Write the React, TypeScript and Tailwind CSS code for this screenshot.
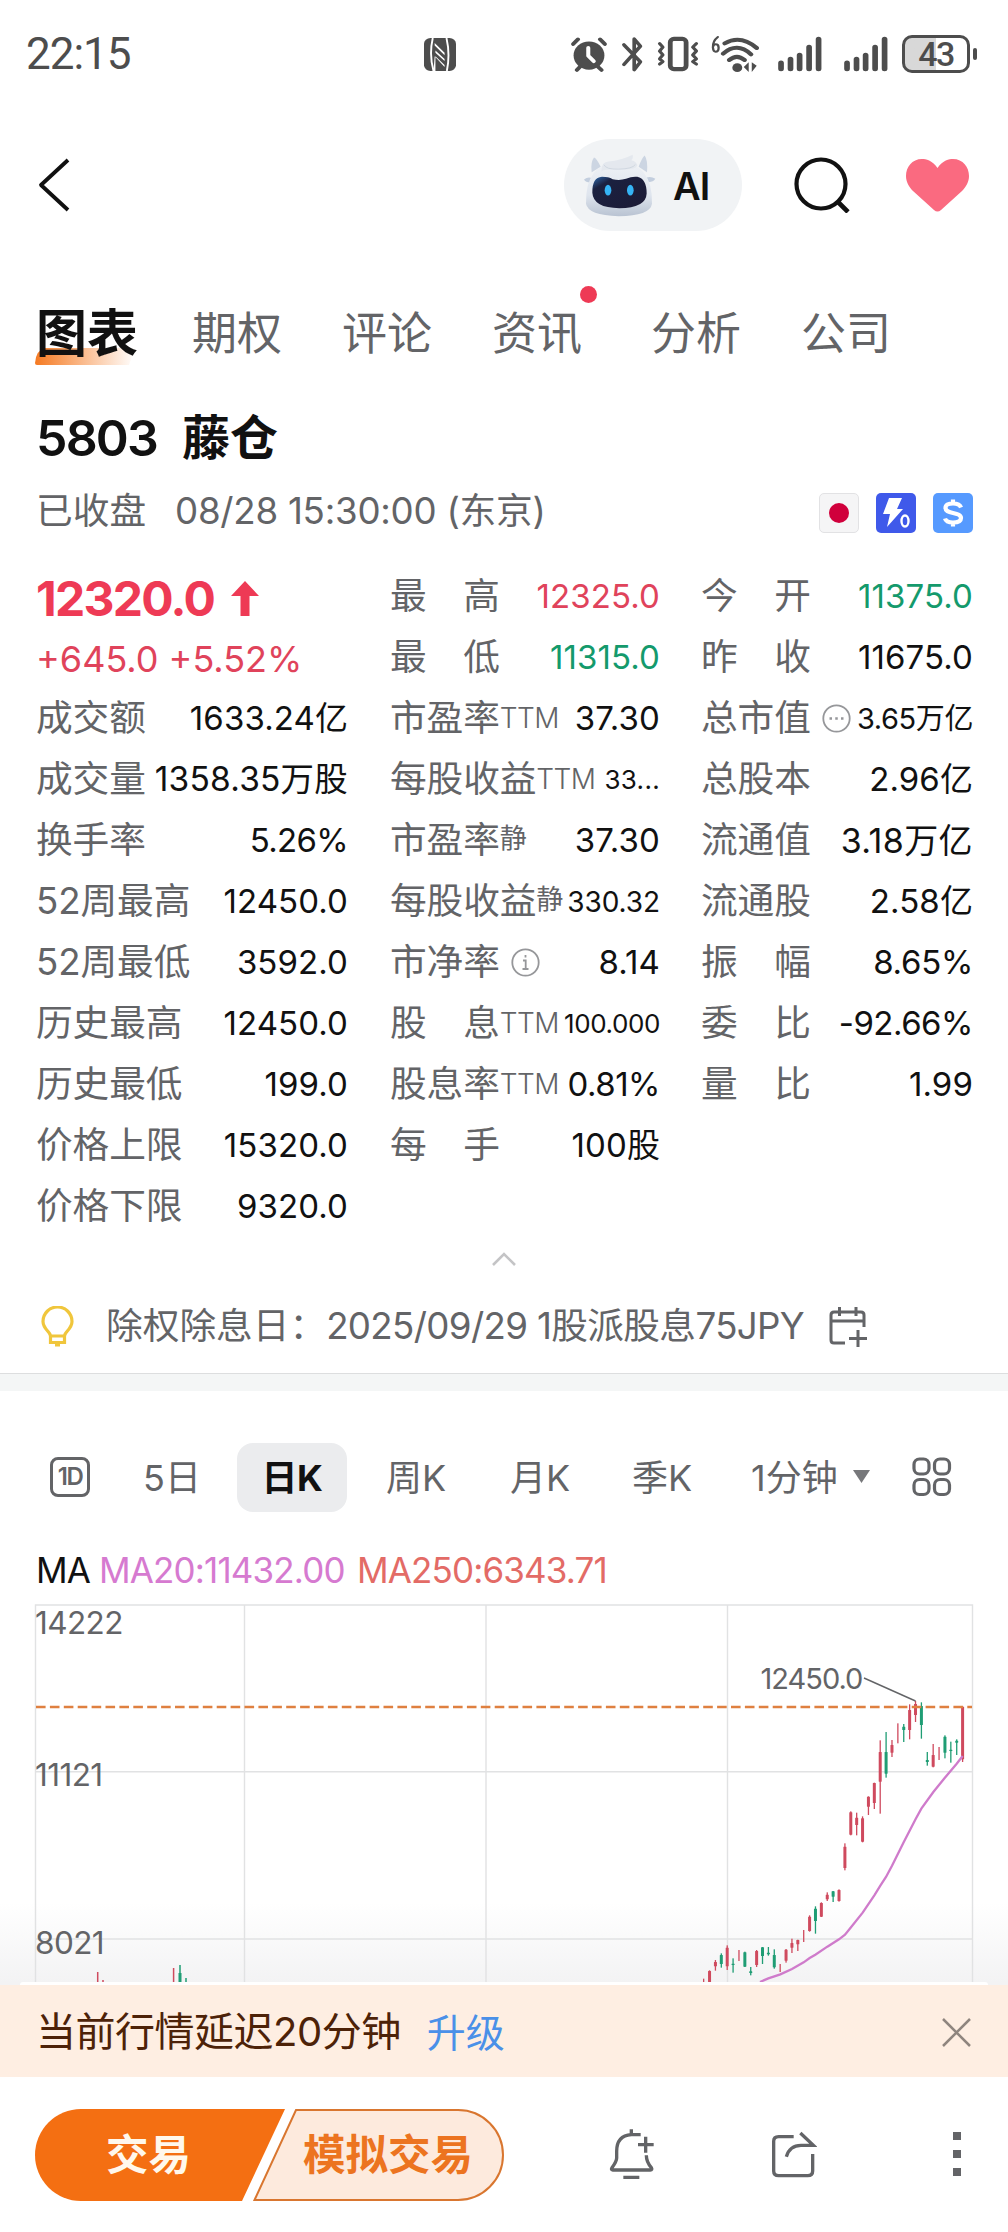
import React from 'react';
import clsx from 'clsx';

type Tone = 'up' | 'down' | 'plain';

interface Stat {
  label: string;
  suffix?: string;
  icon?: 'more' | 'info';
  value: string;
  tone?: Tone;
  size?: string;
}

const leftStats: Stat[] = [
  { label: '成交额', value: '1633.24亿' },
  { label: '成交量', value: '1358.35万股', size: 'text-[33.5px] tracking-[0.2px]' },
  { label: '换手率', value: '5.26%', size: 'text-[33px] tracking-[-0.7px]' },
  { label: '52周最高', value: '12450.0' },
  { label: '52周最低', value: '3592.0' },
  { label: '历史最高', value: '12450.0' },
  { label: '历史最低', value: '199.0' },
  { label: '价格上限', value: '15320.0' },
  { label: '价格下限', value: '9320.0' },
];

const middleStats: Stat[] = [
  { label: '最　高', value: '12325.0', tone: 'up' },
  { label: '最　低', value: '11315.0', tone: 'down' },
  { label: '市盈率', suffix: 'TTM', value: '37.30' },
  { label: '每股收益', suffix: 'TTM', value: '33...', size: 'text-[26px] tracking-[0.3px]' },
  { label: '市盈率', suffix: '静', value: '37.30' },
  { label: '每股收益', suffix: '静', value: '330.32', size: 'text-[28px] tracking-[-0.1px]' },
  { label: '市净率', icon: 'info', value: '8.14' },
  { label: '股　息', suffix: 'TTM', value: '100.000', size: 'text-[26px] tracking-[-0.4px]' },
  { label: '股息率', suffix: 'TTM', value: '0.81%', size: 'text-[33px] tracking-[-0.5px]' },
  { label: '每　手', value: '100股' },
];

const rightStats: Stat[] = [
  { label: '今　开', value: '11375.0', tone: 'down' },
  { label: '昨　收', value: '11675.0' },
  { label: '总市值', icon: 'more', value: '3.65万亿', size: 'text-[29px] tracking-[-0.4px]' },
  { label: '总股本', value: '2.96亿' },
  { label: '流通值', value: '3.18万亿', size: 'text-[34px] tracking-[0.4px]' },
  { label: '流通股', value: '2.58亿' },
  { label: '振　幅', value: '8.65%', size: 'text-[33px] tracking-[-0.3px]' },
  { label: '委　比', value: '-92.66%', size: 'text-[33px] tracking-[-0.5px]' },
  { label: '量　比', value: '1.99' },
];

// [up, high, bodyTop, bodyBottom, low], newest first, in thirds of a pixel
const candles: [boolean, number, number, number, number][] = [
  [true, 320, 320, 478, 486],
  [false, 418, 422, 428, 465],
  [false, 425, 449, 453, 488],
  [false, 406, 410, 458, 475],
  [true, 441, 0, 0, 480],
  [true, 432, 465, 500, 502],
  [false, 456, 480, 486, 497],
  [false, 307, 318, 375, 416],
  [true, 303, 312, 345, 366],
  [true, 313, 330, 390, 418],
  [false, 372, 380, 390, 426],
  [true, 370, 0, 0, 430],
  [true, 420, 435, 458, 471],
  [false, 396, 456, 521, 533],
  [true, 421, 456, 545, 641],
  [true, 548, 549, 609, 627],
  [true, 589, 590, 620, 645],
  [true, 649, 655, 725, 727],
  [true, 638, 653, 675, 706],
  [true, 634, 637, 704, 706],
  [true, 730, 740, 804, 811],
  [true, 868, 870, 903, 905],
  [false, 873, 874, 890, 906],
  [true, 877, 884, 898, 903],
  [true, 907, 909, 950, 951],
  [false, 919, 926, 963, 1001],
  [true, 946, 950, 993, 995],
  [true, 990, 0, 0, 1026],
  [true, 1019, 1020, 1033, 1053],
  [true, 1016, 1029, 1043, 1059],
  [true, 1047, 1049, 1082, 1088],
  [true, 1092, 0, 0, 1116],
  [false, 1048, 1065, 1102, 1106],
  [false, 1041, 1058, 1063, 1067],
  [false, 1041, 1042, 1068, 1092],
  [true, 1050, 1053, 1095, 1101],
  [false, 1101, 1114, 1119, 1126],
  [false, 1055, 1057, 1100, 1101],
  [true, 1050, 0, 0, 1083],
  [false, 1075, 1091, 1095, 1118],
  [true, 1036, 1043, 1099, 1110],
  [false, 1060, 1065, 1092, 1103],
  [true, 1080, 1086, 1099, 1112],
  [true, 1111, 1113, 1146, 1147],
  [true, 1136, 0, 0, 1147],
];

const ma20: [number, number][] = [
  [360, 1146], [385, 1135], [421, 1123], [456, 1107], [491, 1087], [509, 1074], [526, 1064],
  [562, 1040], [597, 1018], [615, 1004], [633, 982], [668, 938], [703, 886], [721, 857],
  [738, 831], [756, 797], [791, 727], [827, 657], [844, 626], [880, 576], [914, 534],
  [950, 491], [968, 468],
];

const toX = (v: number) => 640 + v / 3;
const toY = (v: number) => v / 3 - 3;

const Signal = ({ className }: { className?: string }) => (
  <svg className={clsx('h-9 w-11', className)} viewBox="968 45 116 108" preserveAspectRatio="none" stroke="#4d4d4d" strokeWidth="15" strokeLinecap="round">
    <path d="M976 126V143M1001 115V143M1025 103V143M1050 79V143M1075 55V143" />
  </svg>
);

const StatusBar = () => (
  <div className="flex h-[108px] items-center pl-[26px] pr-[31px] text-[#4d4d4d]">
    <span className="w-[398px] font-[Roboto] text-[44px] leading-none tracking-[-1px]">22:15</span>
    <svg className="h-[33px] w-8" viewBox="37 50 84 98" preserveAspectRatio="none">
      <rect x="37" y="50" width="84" height="98" rx="17" fill="#4d4d4d" />
      <path d="M60 50Q50 100 62 148M96 50Q106 98 97 148" stroke="#fff" strokeWidth="5" fill="none" />
      <path d="M65 65V72L91 101V94ZM67 87V94L91 118V112ZM67 104V148H62L65 104L91 136V130Z" fill="#fff" />
    </svg>
    <div className="ml-auto flex items-center">
      <svg className="h-[35px] w-9" viewBox="422 47 98 104" preserveAspectRatio="none">
        <circle cx="471" cy="102" r="42" fill="#4d4d4d" />
        <path d="M428 68L441 54M514 68L501 54M438 145L446 136M505 145L496 136" stroke="#4d4d4d" strokeWidth="11" strokeLinecap="round" />
        <path d="M469 79V103L484 119" stroke="#fff" strokeWidth="11" strokeLinecap="round" strokeLinejoin="round" fill="none" />
      </svg>
      <svg className="ml-3.5 h-9 w-[22px]" viewBox="554 43 60 110" preserveAspectRatio="none" fill="none" stroke="#4d4d4d" strokeWidth="10" strokeLinejoin="round" strokeLinecap="round">
        <path d="M562 70L607 122L590 146V52L607 74L562 130" />
      </svg>
      <svg className="ml-3.5 h-9 w-[42px]" viewBox="648 44 114 110" preserveAspectRatio="none" fill="none" stroke="#4d4d4d">
        <rect x="684" y="53" width="43" height="92" rx="10" strokeWidth="13" />
        <path d="M655 67L664 78L655 90L664 102L655 114L664 122L655 130M755 67L745 78L755 90L745 102L755 114L745 122L755 130" strokeWidth="9" strokeLinecap="round" strokeLinejoin="round" />
      </svg>
      <svg className="ml-3 h-[38px] w-12" viewBox="792 40 126 114" preserveAspectRatio="none" fill="none" stroke="#4d4d4d" strokeLinecap="round">
        <path d="M828 65Q870 38 912 79M824 96Q860 60 897 98M840 115Q860 96 880 115" strokeWidth="12" />
        <circle cx="861" cy="138" r="13" fill="#4d4d4d" stroke="none" />
        <path d="M878 136L891 122V151ZM899 122V151L912 132Z" fill="#4d4d4d" stroke="none" />
        <path d="M810 46Q796 58 797 78Q798 90 804 90Q812 90 812 78Q812 68 804 68Q799 68 797 76" strokeWidth="6" />
      </svg>
      <Signal className="ml-[19px]" />
      <Signal className="ml-[22px]" />
      <div className="ml-3.5 flex h-[38px] w-[68px] items-center justify-center rounded-[10px] border-[3px] border-[#4d4d4d] bg-gradient-to-r from-[#d8d8d8] from-50% to-white to-50% font-[Roboto] text-[34px] font-medium leading-none tracking-[-1.5px]">
        43
      </div>
      <span className="ml-[3px] h-3 w-1 rounded-full bg-[#4d4d4d]" />
    </div>
  </div>
);

const Robot = () => (
  <svg className="h-[67px] w-[75px]" viewBox="70 60 225 200">
    <defs>
      <linearGradient id="shell" x1="0" y1="0" x2="0" y2="1">
        <stop offset="0" stopColor="#eef1f5" />
        <stop offset="0.6" stopColor="#dfe5ee" />
        <stop offset="1" stopColor="#b9c3d2" />
      </linearGradient>
      <linearGradient id="visor" x1="0" y1="0" x2="1" y2="1">
        <stop offset="0" stopColor="#2f6cb0" />
        <stop offset="0.22" stopColor="#1b2140" />
        <stop offset="1" stopColor="#1c1a35" />
      </linearGradient>
    </defs>
    <path d="M99 120Q95 90 106 76Q114 78 126 104ZM265 120Q268 84 258 70Q250 76 240 104Z" fill="#ccd5e2" />
    <path d="M76 142Q88 132 100 138L96 152Q80 150 76 142ZM290 140Q278 132 264 136L270 150Q284 150 290 140Z" fill="#c3cede" />
    <path d="M82 215Q80 92 180 92Q282 92 280 215Q274 252 180 252Q88 250 82 215Z" fill="url(#shell)" />
    <path d="M101 182Q100 136 130 134Q150 134 162 141Q182 146 202 140Q220 132 236 134Q264 140 264 184Q262 228 182 228Q104 228 101 182Z" fill="url(#visor)" />
    <path d="M128 118Q128 88 150 88Q186 86 222 68Q224 80 218 84Q234 88 236 100Q232 114 180 112Q140 110 128 118Z" fill="#e4e8ee" />
    <path d="M136 98Q142 112 180 111Q222 110 230 97" fill="none" stroke="#c6ced9" strokeWidth="2" />
    <ellipse cx="148" cy="174" rx="10" ry="16" fill="#35b4f5" />
    <ellipse cx="215" cy="174" rx="10" ry="16" fill="#35b4f5" />
  </svg>
);

const Header = () => (
  <div className="flex h-[154px] items-center pl-[37px] pr-[38px]">
    <svg className="h-[54px] w-[34px]" viewBox="0 0 34 54" fill="none" stroke="#111" strokeWidth="3.8">
      <path d="M31 2L4 27L31 52" strokeLinejoin="round" />
    </svg>
    <div className="ml-auto flex h-[92px] w-[178px] items-center rounded-full bg-[#f1f3f5] pl-[18px]">
      <Robot />
      <span className="ml-4 pt-0.5 text-[38px] font-semibold leading-none tracking-[-0.8px] text-[#111]">AI</span>
    </div>
    <svg className="ml-[52px] h-[56px] w-[56px]" viewBox="0 0 56 56" fill="none" stroke="#111" strokeWidth="4.2">
      <circle cx="27" cy="27" r="24.5" />
      <path d="M43 44L54 55" strokeWidth="4.6" />
    </svg>
    <svg className="ml-[55px] h-[54px] w-[65px]" viewBox="0 0 65 54" fill="#fa6a80">
      <path d="M32.500 10C27 2 21 1 17 1C7 1 1 9 1 18C1 24 4 29 8 33L29 52Q32.500 55 36 52L57 33C61 29 64 24 64 18C64 9 58 1 48 1C44 1 38 2 32.500 10Z" />
    </svg>
  </div>
);

const Tabs = () => (
  <div className="flex h-[142px] items-center pl-9 text-[45px] leading-none text-[#636467]">
    <div className="relative mr-[54px] text-[51px] font-bold text-[#111]">
      <svg className="absolute -left-px top-10 h-[17px] w-[100px]" viewBox="0 0 100 17">
        <defs>
          <linearGradient id="tabline">
            <stop offset="0" stopColor="#f57a22" />
            <stop offset="1" stopColor="#fff" />
          </linearGradient>
        </defs>
        <path d="M0 15Q1 2 10 0H100L94 17H2Q0 17 0 15Z" fill="url(#tabline)" />
      </svg>
      <span className="relative">图表</span>
    </div>
    <span className="mr-[60px]">期权</span>
    <span className="mr-[60px]">评论</span>
    <span className="relative mr-[69px]">
      资讯
      <i className="absolute -right-[15px] -top-[25px] size-[17px] rounded-full bg-[#ee3a55]" />
    </span>
    <span className="mr-[60px]">分析</span>
    <span>公司</span>
  </div>
);

const Badges = () => (
  <div className="ml-auto flex gap-[17px] pt-[3px]">
    <div className="flex size-10 items-center justify-center rounded-[5px] border border-[#e2e2e4] bg-[#f5f5f6]">
      <span className="size-5 rounded-full bg-[#d0003c]" />
    </div>
    <svg className="size-10" viewBox="0 0 40 40">
      <rect width="40" height="40" rx="5" fill="#3f59ea" />
      <path d="M13 5H26L21 16H27L11 34L14 21H7Z" fill="#fff" />
      <ellipse cx="29" cy="28" rx="3.500" ry="5.500" fill="none" stroke="#fff" strokeWidth="2.400" />
    </svg>
    <svg className="size-10" viewBox="0 0 40 40" fill="none" stroke="#fff">
      <rect width="40" height="40" rx="5" fill="#569aff" stroke="none" />
      <path d="M28 14.500C27 11.500 24 10.500 20 10.500C15 10.500 12.500 12 12.500 15C12.500 18 15 19 20 20C25 21 28 22 28 25C28 28 25 29.500 20 29.500C16 29.500 13 29 12 25.500M20 6.500V10M20 30V33.500" strokeWidth="4.200" />
    </svg>
  </div>
);

const StatRow = ({ stat }: { stat: Stat }) => (
  <div className="flex h-[61px] items-center whitespace-nowrap leading-none">
    <span className="text-[36.7px] tracking-[-0.1px] text-[#636467]">{stat.label}</span>
    {stat.suffix === 'TTM' && <span className="mb-0.5 text-[28px] font-light tracking-[-0.6px] text-[#636467]">TTM</span>}
    {stat.suffix === '静' && <span className="mb-1 text-[27px] text-[#636467]">静</span>}
    {stat.icon && (
      <svg className="ml-[11px] size-[29px]" viewBox="0 0 29 29" fill="none" stroke="#96979a" strokeWidth="1.800">
        <circle cx="14.500" cy="14.500" r="13.200" />
        {stat.icon === 'more' ? (
          <path d="M7.500 14.500h2.500M13.250 14.500h2.500M19 14.500h2.500" strokeWidth="2.500" />
        ) : (
          <path d="M14.500 7v2.500M12 12.500h2.700v8M11.500 21h6" />
        )}
      </svg>
    )}
    <span
      className={clsx(
        'ml-auto',
        stat.size ?? 'text-[33px] tracking-[0.1px]',
        stat.tone === 'up' && 'text-[#e0435b]',
        stat.tone === 'down' && 'text-[#149a6c]',
        !stat.tone && 'text-[#111]',
      )}
    >
      {stat.value}
    </span>
  </div>
);

const Quote = () => (
  <section>
    <div className="flex h-[66px] items-center pl-9 pt-0.5 text-[50px] font-bold leading-none text-[#111]">
      <span className="w-[146px] font-semibold tracking-[-1.8px]">5803</span>
      <span className="text-[48px]">藤仓</span>
    </div>
    <div className="flex h-[82px] items-center pl-9 pr-[35px] pt-px text-[36.7px] leading-none text-[#636467]">
      <span className="w-[139px]">已收盘</span>
      <span className="tracking-[-0.25px]">08/28 15:30:00 (东京)</span>
      <Badges />
    </div>
    <div className="flex pl-9 pr-[35px] pt-3.5">
      <div className="w-[312px]">
        <div className="flex h-[61px] items-center pt-1 text-[48px] font-bold leading-none tracking-[-1.7px] text-[#ee3a55]">
          12320.0
          <svg className="ml-[17px] h-9 w-7" viewBox="0 0 28 36" fill="#ee3a55">
            <path d="M14 0L28 15H18.500V35H9.500V15H0Z" />
          </svg>
        </div>
        <div className="flex h-[61px] items-center pt-0.5 text-[36px] leading-none text-[#e0435b]">+645.0 +5.52%</div>
        {leftStats.map((s) => <StatRow key={s.label} stat={s} />)}
      </div>
      <div className="ml-[42px] w-[270px]">
        {middleStats.map((s, i) => <StatRow key={i} stat={s} />)}
      </div>
      <div className="ml-[41px] w-[272px]">
        {rightStats.map((s) => <StatRow key={s.label} stat={s} />)}
      </div>
    </div>
    <div className="flex h-[43px] items-center justify-center">
      <svg className="h-3.5 w-6" viewBox="0 0 24 14" fill="none" stroke="#c4c4c6" strokeWidth="2.600">
        <path d="M1 13L12 2L23 13" />
      </svg>
    </div>
  </section>
);

const DividendNotice = () => (
  <div className="flex h-[93px] items-center pl-[41px] text-[36.7px] leading-none text-[#636467]">
    <svg className="h-[41px] w-[33px]" viewBox="0 0 33 41" fill="none" stroke="#f0c63c" strokeWidth="3.200">
      <path d="M9.500 30C9.500 26 2 23 2 15.500A14.500 14.500 0 0 1 31 15.500C31 23 23.500 26 23.500 30Z" strokeLinejoin="round" />
      <path d="M9.500 30V36.500H23.500V30M14 39H19" />
    </svg>
    <span className="ml-8">除权除息日：</span>
    <span className="tracking-[-0.65px]">2025/09/29 1股派股息75JPY</span>
    <svg className="ml-[25px] h-[42px] w-[39px]" viewBox="0 0 39 42" fill="none" stroke="#636467" strokeWidth="3">
      <path d="M35 21V9Q35 6 32 6H5Q2 6 2 9V34Q2 37 5 37H16M2 15H35M10.500 1V10M27 1V10M29 24V41M20 32.500H38" />
    </svg>
  </div>
);

const Periods = () => (
  <div className="mt-[26px] flex h-[120px] items-center pl-[50px] text-[36px] leading-none text-[#636467]">
    <span className="flex size-10 items-center justify-center rounded-lg border-[3px] border-[#636467] text-[24px] font-semibold tracking-[-1.4px]">1D</span>
    <span className="ml-[53px] w-[94px] pt-0.5">5日</span>
    <span className="flex h-[69px] w-[110px] items-center justify-center rounded-2xl bg-[#ebecee] pt-0.5 font-bold tracking-[-0.5px] text-[#111]">日K</span>
    <span className="ml-[39px] w-[124px] pt-0.5">周K</span>
    <span className="w-[122px] pt-0.5">月K</span>
    <span className="w-[119px] pt-0.5">季K</span>
    <span className="w-[102px] pt-0.5">1分钟</span>
    <svg className="h-3.5 w-[17px]" viewBox="0 0 17 14" fill="#77787b"><path d="M0 0H17L8.500 13Z" /></svg>
    <svg className="ml-[42px] size-10" viewBox="0 0 40 40" fill="none" stroke="#636467" strokeWidth="3.200">
      <rect x="2" y="2" width="15" height="15" rx="5.500" />
      <rect x="22.500" y="2" width="15" height="15" rx="5.500" />
      <rect x="2" y="22.500" width="15" height="15" rx="5.500" />
      <rect x="22.500" y="22.500" width="15" height="15" rx="5.500" />
    </svg>
  </div>
);

const Chart = () => (
  <section>
    <div className="flex h-[66px] items-center pl-9 text-[35px] leading-none tracking-[-0.85px]">
      <span className="w-[63px] text-[#111]">MA</span>
      <span className="w-[258px] text-[#d67ad0]">MA20:11432.00</span>
      <span className="text-[#e36b66]">MA250:6343.71</span>
    </div>
    <svg className="block h-[379px] w-[1008px]" viewBox="0 0 1008 379">
      <defs>
        <linearGradient id="fade" x1="0" y1="0" x2="0" y2="1">
          <stop offset="0" stopColor="#fff" />
          <stop offset="1" stopColor="#f3f3f4" />
        </linearGradient>
      </defs>
      <rect y="300" width="1008" height="79" fill="url(#fade)" />
      <path d="M35.500 379V2H972.500V379M244.500 2V379M486 2V379M727.500 2V379M35.500 168.700H972.500M35.500 336H972.500" fill="none" stroke="#e1e2e3" strokeWidth="1.400" />
      {candles.map(([up, high, top, bottom, low], i) => {
        const x = 962.6 - i * 5.885;
        return (
          <g key={i} fill={up ? '#cf4a5e' : '#1f9d74'}>
            <rect x={x - 0.65} y={toY(high)} width="1.300" height={(low - high) / 3} />
            {top > 0 && <rect x={x - 1.5} y={toY(top)} width="3" height={(bottom - top) / 3} rx="0.300" />}
          </g>
        );
      })}
      <path d="M97.700 369V379M103 377V379M173.600 365V379" stroke="#cf4a5e" strokeWidth="1.500" />
      <path d="M180 362V379M186 375V379" stroke="#1f9d74" strokeWidth="1.500" />
      <path d="M180 370V379" stroke="#1f9d74" strokeWidth="3" />
      <polyline points={ma20.map(([x, y]) => `${toX(x)},${toY(y)}`).join(' ')} fill="none" stroke="#cf7bcb" strokeWidth="2.300" />
      <path d="M36 104H972" stroke="#df8040" strokeWidth="2.600" strokeDasharray="9.600 4.300" />
      <path d="M864 75L915.500 98" stroke="#636467" strokeWidth="1.400" />
      <g fill="#636467" fontSize="31.500" letterSpacing="-0.6">
        <text x="35" y="31">14222</text>
        <text x="35" y="183">11121</text>
        <text x="35" y="350.500">8021</text>
        <text x="760.500" y="86" fontSize="29" letterSpacing="-1">12450.0</text>
      </g>
    </svg>
  </section>
);

const DelayBanner = () => (
  <div className="bg-[#f3f3f4]">
    <div className="mx-5 h-[3px] rounded-t-full bg-white" />
    <div className="flex h-[92px] items-center bg-[#feeee2] pl-9 pr-[37px] pt-0.5 text-[40px] leading-none text-[#4d2208]">
      <span className="tracking-[-0.5px]">当前行情延迟20分钟</span>
      <span className="ml-[26px] text-[39px] text-[#4a90e8]">升级</span>
      <svg className="ml-auto size-[29px]" viewBox="0 0 29 29" stroke="#8f857e" strokeWidth="2.500">
        <path d="M1 1L28 28M28 1L1 28" />
      </svg>
    </div>
  </div>
);

const Toolbar = () => (
  <div className="flex h-[155px] items-center pl-[35px] pr-[47px]">
    <div className="relative flex h-[92px] w-[470px] items-center text-[42.5px] font-bold leading-none">
      <svg className="absolute inset-0 h-[92px] w-[470px]" viewBox="0 0 470 92">
        <path d="M46 0H250L207 92H46A46 46 0 0 1 46 0Z" fill="#f46f12" />
        <path d="M261 1H423A45 45 0 0 1 423 91H219.500Z" fill="#fdeadd" stroke="#d9762f" strokeWidth="2" />
      </svg>
      <button className="relative ml-[71px] w-[197px] pt-0.5 text-left text-[#fff8ec]">交易</button>
      <button className="relative pt-0.5 text-[#ec7420]">模拟交易</button>
    </div>
    <svg className="ml-[104px] h-[52px] w-[46px]" viewBox="59 83 138 156" fill="none" stroke="#636467" strokeWidth="10">
      <path d="M154 100H126Q82 103 82 150V170Q82 180 68 199Q64 206 70 206H183Q190 206 186 199Q171 182 171 162M126 84V100M102 228H150M169 106V154M146 130H193" />
    </svg>
    <svg className="ml-[116px] h-[47px] w-[46px]" viewBox="544 88 138 141" fill="none" stroke="#636467" strokeWidth="10">
      <path d="M612 105H567Q552 105 552 119V208Q552 222 567 222H654Q669 222 669 208V157M590 165Q600 131 634 131H671L632 94" />
    </svg>
    <svg className="ml-auto h-[45px] w-2" viewBox="0 0 8 45" fill="#636467">
      <path d="M0 0H8V8H0ZM0 18H8V26H0ZM0 36H8V44H0Z" />
    </svg>
  </div>
);

export default function App() {
  return (
    <div className="h-[2232px] w-[1008px] overflow-hidden bg-white font-[Inter,'Noto_Sans_CJK_SC',sans-serif]">
      <StatusBar />
      <Header />
      <Tabs />
      <Quote />
      <DividendNotice />
      <div className="h-[18px] border-t border-[#dddedf] bg-[#f4f6f6]" />
      <Periods />
      <Chart />
      <DelayBanner />
      <Toolbar />
    </div>
  );
}
